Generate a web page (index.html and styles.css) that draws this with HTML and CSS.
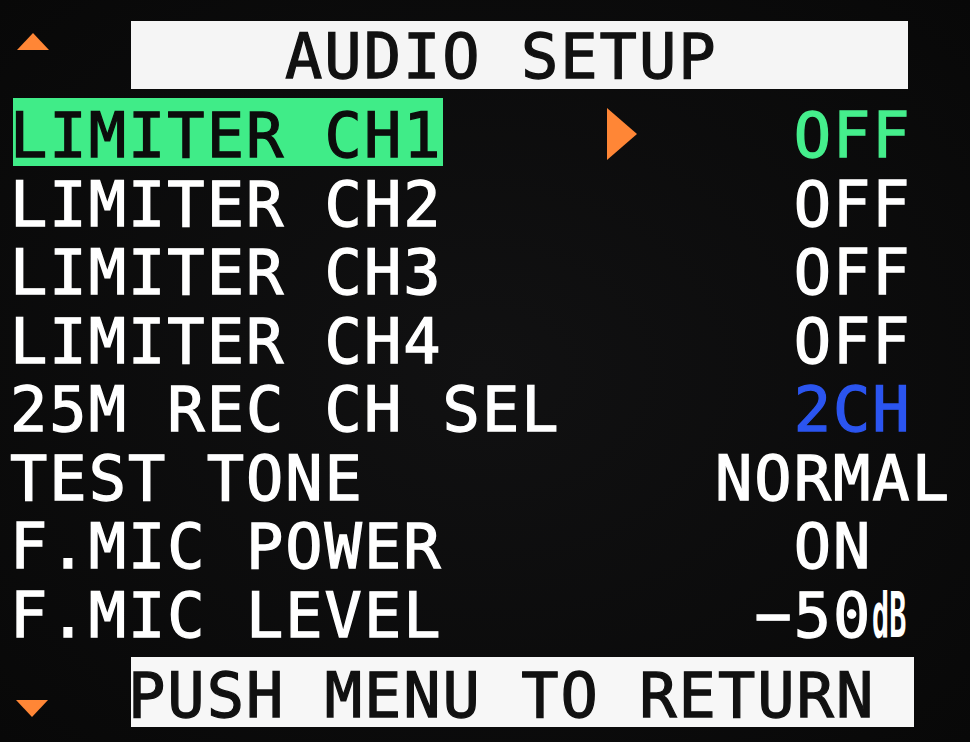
FILE: index.html
```html
<!DOCTYPE html>
<html lang="en">
<head>
    <meta charset="UTF-8">
    <meta name="viewport" content="width=device-width, initial-scale=1.0">
    <title>Audio Setup</title>
    <link rel="stylesheet" href="styles.css">
</head>
<body>
    <div class="screen">
        <header class="menu-head">
            <span class="scroll-up"></span>
            <h1 class="menu-title">AUDIO SETUP</h1>
        </header>

        <section class="menu-list">
            <div class="menu-row selected">
                <span class="label">LIMITER CH1</span>
                <span class="marker"></span>
                <span class="value green">  OFF</span>
            </div>
            <div class="menu-row">
                <span class="label">LIMITER CH2</span>
                <span class="marker"></span>
                <span class="value">  OFF</span>
            </div>
            <div class="menu-row">
                <span class="label">LIMITER CH3</span>
                <span class="marker"></span>
                <span class="value">  OFF</span>
            </div>
            <div class="menu-row">
                <span class="label">LIMITER CH4</span>
                <span class="marker"></span>
                <span class="value">  OFF</span>
            </div>
            <div class="menu-row">
                <span class="label">25M REC CH SEL</span>
                <span class="marker"></span>
                <span class="value blue">  2CH</span>
            </div>
            <div class="menu-row">
                <span class="label">TEST TONE</span>
                <span class="marker"></span>
                <span class="value">NORMAL</span>
            </div>
            <div class="menu-row">
                <span class="label">F.MIC POWER</span>
                <span class="marker"></span>
                <span class="value">  ON</span>
            </div>
            <div class="menu-row">
                <span class="label">F.MIC LEVEL</span>
                <span class="marker"></span>
                <span class="value"> −50<span class="unit">dB</span></span>
            </div>
        </section>

        <footer class="menu-foot">
            <span class="scroll-down"></span>
            <p class="menu-hint">PUSH MENU TO RETURN</p>
        </footer>
    </div>
</body>
</html>
```

FILE: styles.css
```css
body {
    margin: 0;
    padding: 0;
    background: #0a0a0b;
    color: #fff;
    font-family: 'DejaVu Sans Mono', 'Liberation Mono', monospace;
    font-size: 62px;
    letter-spacing: 2px;
    -webkit-text-stroke: 1.3px currentColor;
    overflow: hidden;
}

.screen {
    width: 970px;
    height: 742px;
    padding-top: 21px;
    box-sizing: border-box;
    background: radial-gradient(ellipse at center, #111112 0%, #080808 100%);
}

/* title bar */
.menu-head {
    display: flex;
    align-items: flex-start;
    height: 68px;
}

.scroll-up {
    width: 0;
    height: 0;
    margin: 12px 82px 0 17px;
    border-left: 16px solid transparent;
    border-right: 16px solid transparent;
    border-bottom: 17px solid #ff8636;
}

.menu-title {
    margin: 0;
    width: 777px;
    height: 68px;
    box-sizing: border-box;
    padding: 6px 0 0 154px;
    background: #f5f5f5;
    color: #111;
    font-size: 62px;
    font-weight: normal;
    line-height: 60px;
    white-space: pre;
}

/* menu rows */
.menu-list {
    margin-top: 9px;
}

.menu-row {
    display: grid;
    grid-template-columns: 594px 108px auto;
    height: 68.5px;
    padding-left: 13px;
}

.label {
    justify-self: start;
    height: 68px;
    box-sizing: border-box;
    padding-top: 8px;
    line-height: 60px;
    text-indent: -3px;
    white-space: pre;
}

.selected .label {
    background: #40ec88;
    color: #0c0c0c;
}

.marker {
    width: 0;
    height: 0;
    margin-top: 10px;
}

.selected .marker {
    border-top: 26px solid transparent;
    border-bottom: 26px solid transparent;
    border-left: 30px solid #ff8636;
}

.value {
    padding-top: 8px;
    line-height: 60px;
    white-space: pre;
}

.green {
    color: #45ee8c;
}

.blue {
    color: #2b55f0;
}

.unit {
    display: inline-block;
    font-weight: bold;
    letter-spacing: 0;
    -webkit-text-stroke: 0;
    transform: scaleX(0.46);
    transform-origin: left center;
}

/* footer bar */
.menu-foot {
    display: flex;
    align-items: flex-start;
    margin-top: 11px;
}

.scroll-down {
    width: 0;
    height: 0;
    margin: 43px 83px 0 16px;
    border-left: 16px solid transparent;
    border-right: 16px solid transparent;
    border-top: 17px solid #ff8636;
}

.menu-hint {
    margin: 0;
    width: 783px;
    height: 70px;
    box-sizing: border-box;
    padding-top: 9px;
    background: #f7f7f7;
    color: #111;
    line-height: 60px;
    text-indent: -3px;
    white-space: pre;
}
```
